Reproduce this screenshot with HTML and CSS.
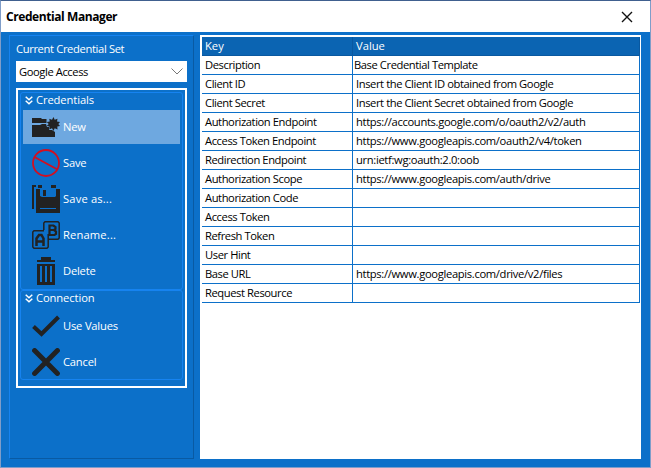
FILE: index.html
```html
<!DOCTYPE html>
<html lang="en">
<head>
<meta charset="utf-8">
<title>Credential Manager</title>
<link rel="stylesheet" href="styles.css">
</head>
<body>
<div class="window">
  <header class="titlebar">
    <h1>Credential Manager</h1>
    <svg class="close" width="12" height="12" viewBox="0 0 12 12"><path d="M1 1L11 11M11 1L1 11" stroke="#111" stroke-width="1.35"/></svg>
  </header>
  <main class="content">
    <aside class="panel">
      <div class="label">Current Credential Set</div>
      <div class="select"><span>Google Access</span>
        <svg width="12" height="7" viewBox="0 0 12 7"><path d="M.5 .5L6 6L11.500 .5" fill="none" stroke="#777" stroke-width="1"/></svg>
      </div>
      <nav class="menu">
        <section class="group">
          <h2><svg width="8" height="9" viewBox="0 0 8 9"><path d="M.7 .7L4 3.700L7.300 .7M.7 4.700L4 7.700L7.300 4.700" fill="none" stroke="#fff" stroke-width="1.5"/></svg><span>Credentials</span></h2>
          <div class="item selected">
            <svg class="icon" viewBox="0 0 28 28" fill="#222"><path d="M0 5H9L10 6H14.500V10H0Z"/><path d="M0 12H8L10 11H14L15 14H17V17H20L23 19V24H0Z"/><path d="M21.500 4L22.700 6.800L25.500 5.800L25 8.500L28 9L26.300 11L28 13L25.300 13.500L25.500 16.500L22.700 15.200L21.500 18L20 15.200L17.300 16.500L17.500 13.500L14.800 13L16.700 11L14.800 9L17.700 8.500L17.300 5.800L20 6.800Z"/></svg>
            <span>New</span></div>
          <div class="item">
            <svg class="icon" viewBox="0 0 28 28" fill="none" stroke="#d20f20" stroke-width="1.8"><circle cx="14" cy="14" r="13"/><path d="M2.500 8L25.500 20.500"/></svg>
            <span>Save</span></div>
          <div class="item">
            <svg class="icon" viewBox="0 0 28 28" fill="#222"><path d="M0 0H4V2H2V24H0ZM6 0H10V3H6ZM19 0H24V3H19ZM4 4H8V11L10 12H23L24 11V4H28V28H4ZM11 5H14V11H11Z"/><path d="M8 23.500H24" stroke="#0c70c9"/></svg>
            <span class="ellipsis">Save as...</span></div>
          <div class="item">
            <svg class="icon" viewBox="0 0 28 28" fill="none" stroke="#222"><path d="M16 18.200H26L27.200 17V2L26 .8H13L11.800 2V9" stroke-width="1.500"/><path d="M12 9.800H2L.8 11V26L2 27.200H15L16.200 26V13" stroke-width="1.500"/><path d="M17.500 14V4.500H21.500L23.500 6V8L22 9H17.500M22 9L24 10.500V13L22.500 14H16" stroke-width="2.200"/><path d="M4.500 25V17.500L7 14H9.500L11.500 17.500V25M4.500 20.500H11.500" stroke-width="2.500"/></svg>
            <span class="ellipsis">Rename...</span></div>
          <div class="item">
            <svg class="icon" viewBox="0 0 28 28" fill="#222"><path d="M9 0H19V3H23V5H5V3H9Z"/><path fill-rule="evenodd" d="M5 7H23V28H5ZM8 9V25H10V9ZM13 9V25H15V9ZM18 9V25H20V9Z"/></svg>
            <span>Delete</span></div>
        </section>
        <section class="group">
          <h2><svg width="8" height="9" viewBox="0 0 8 9"><path d="M.7 .7L4 3.700L7.300 .7M.7 4.700L4 7.700L7.300 4.700" fill="none" stroke="#fff" stroke-width="1.5"/></svg><span>Connection</span></h2>
          <div class="item">
            <svg class="icon" viewBox="0 0 28 28" fill="none" stroke="#222" stroke-width="4"><path d="M1.500 14.500L9.500 22L26.500 5"/></svg>
            <span>Use Values</span></div>
          <div class="item">
            <svg class="icon" viewBox="0 0 28 28" stroke="#222" stroke-width="5" stroke-linecap="round"><path d="M2.600 2.600L25.400 25.400M25.400 2.600L2.600 25.400"/></svg>
            <span>Cancel</span></div>
        </section>
      </nav>
    </aside>
    <div class="grid">
      <table>
        <thead><tr><th>Key</th><th>Value</th></tr></thead>
        <tbody>
          <tr><td>Description</td><td class="editing">Base Credential Template</td></tr>
          <tr><td>Client ID</td><td>Insert the Client ID obtained from Google</td></tr>
          <tr><td>Client Secret</td><td>Insert the Client Secret obtained from Google</td></tr>
          <tr><td>Authorization Endpoint</td><td class="url">https://accounts.google.com/o/oauth2/v2/auth</td></tr>
          <tr><td>Access Token Endpoint</td><td class="url">https://www.googleapis.com/oauth2/v4/token</td></tr>
          <tr><td>Redirection Endpoint</td><td class="url">urn:ietf:wg:oauth:2.0:oob</td></tr>
          <tr><td>Authorization Scope</td><td class="url">https://www.googleapis.com/auth/drive</td></tr>
          <tr><td>Authorization Code</td><td></td></tr>
          <tr><td>Access Token</td><td></td></tr>
          <tr><td>Refresh Token</td><td></td></tr>
          <tr><td>User Hint</td><td></td></tr>
          <tr><td>Base URL</td><td class="url">https://www.googleapis.com/drive/v2/files</td></tr>
          <tr><td>Request Resource</td><td></td></tr>
        </tbody>
      </table>
    </div>
  </main>
</div>
</body>
</html>
```
FILE: styles.css
```css
* { box-sizing: border-box; }
body {
  margin: 0;
  font: 11.2px/18px Tahoma, "Open Sans", sans-serif;
  letter-spacing: -0.42px;
  color: #000;
}
.window {
  width: 651px;
  height: 468px;
  display: flex;
  flex-direction: column;
  border: 1px solid #7f9dc9;
  border-top-color: #40608f;
  background: #0c70c9;
}
.titlebar {
  height: 31px;
  display: flex;
  align-items: center;
  justify-content: space-between;
  padding: 0 17px 0 5px;
  background: #fff;
}
h1 { margin: 1px 0 0; font-size: 12px; font-weight: 700; letter-spacing: -0.42px; }
.content { flex: 1; display: flex; gap: 6px; padding: 3px 8px 8px; }
.panel {
  width: 185px;
  border: 1px solid #1683f0;
  border-right-color: #095aa3;
  border-bottom-color: #095aa3;
  padding: 4px 6px 0;
  color: #fff;
}
.label { height: 21px; letter-spacing: -0.36px; }
.select {
  height: 21px;
  width: 171px;
  display: flex;
  align-items: center;
  justify-content: space-between;
  padding: 0 4px 0 3px;
  background: #fff;
  color: #000;
}
.menu { width: 171px; height: 300px; margin-top: 6px; border: 2px solid #fff; padding: 2px; }
.group { width: 163px; height: 198px; border: 1px solid #1683f0; border-radius: 3px; padding: 0 2px; }
.group + .group { height: 90px; }
h2 { display: flex; align-items: center; gap: 3px; height: 14px; margin: 0 0 3px; padding-left: 2px; font-size: inherit; font-weight: 400; letter-spacing: -0.1px; }
.item {
  height: 34px;
  display: flex;
  align-items: center;
  gap: 3px;
  padding-left: 9px;
  margin-bottom: 2px;
  letter-spacing: -0.2px;
}
.ellipsis { letter-spacing: 0.15px; }
.group + .group h2 { margin-bottom: 4px; }
.selected { width: 157px; background: #6ea8e0; }
.icon { width: 28px; height: 28px; flex: none; }
.grid { width: 441px; height: 424px; padding: 2px 1px 0 2px; background: #fff; }
table { width: 438px; table-layout: fixed; border-collapse: separate; border-spacing: 0; }
th, td {
  height: 19px;
  padding: 0 3px;
  border: solid #0c70c9;
  border-width: 0 1px 1px 0;
  line-height: 18px;
  text-align: left;
  font-weight: 400;
  white-space: nowrap;
}
th { background: #0b64b2; border-color: #0958a0; color: #fff; letter-spacing: 0; }
th:first-child { width: 151px; }
td.editing { padding-left: 1px; }
td.url { letter-spacing: -0.33px; }
```
